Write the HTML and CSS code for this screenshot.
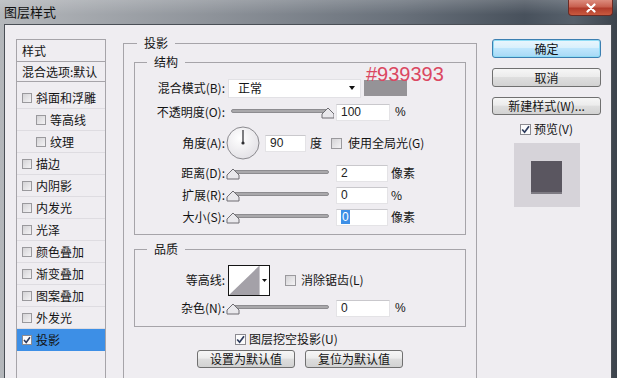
FILE: index.html
```html
<!DOCTYPE html>
<html lang="zh-CN">

<head>
  <meta charset="UTF-8">
  <meta name="viewport" content="width=device-width, initial-scale=1.0">
  <title>图层样式</title>
  <link rel="stylesheet" href="styles.css">
</head>

<body>
  <div class="window">
    <div class="titlebar">
      <span class="title">图层样式</span>
      <div class="close-btn">
        <svg width="12" height="10" viewBox="0 0 12 10">
          <path d="M2.5 1.5 L9.5 8.5 M9.5 1.5 L2.5 8.5" stroke="#fff" stroke-width="2.2" stroke-linecap="round" />
        </svg>
      </div>
    </div>

    <div class="client">
      <!-- effect list on the left -->
      <div class="fx-panel">
        <div class="fx-head">样式</div>
        <div class="fx-blend">混合选项:默认</div>
        <ul class="fx-list">
          <li><span class="cb"></span>斜面和浮雕</li>
          <li class="sub"><span class="cb"></span>等高线</li>
          <li class="sub"><span class="cb"></span>纹理</li>
          <li><span class="cb"></span>描边</li>
          <li><span class="cb"></span>内阴影</li>
          <li><span class="cb"></span>内发光</li>
          <li><span class="cb"></span>光泽</li>
          <li><span class="cb"></span>颜色叠加</li>
          <li><span class="cb"></span>渐变叠加</li>
          <li><span class="cb"></span>图案叠加</li>
          <li><span class="cb"></span>外发光</li>
          <li class="active">
            <span class="cb on"><svg width="8" height="8" viewBox="0 0 8 8"><path d="M1 4 L3.2 6.5 L7 1.2" fill="none" stroke="#2c3a5c" stroke-width="1.6" /></svg></span>投影
          </li>
        </ul>
      </div>

      <!-- drop shadow settings -->
      <fieldset class="group outer">
        <legend>投影</legend>

        <fieldset class="group inner">
          <legend>结构</legend>
          <div class="rows">
            <div class="row h20 blend-row">
              <span class="lbl">混合模式(B):</span>
              <div class="select">正常<span class="arrow"></span></div>
              <div class="swatch"></div>
              <span class="hex">#939393</span>
            </div>

            <div class="row h20">
              <span class="lbl">不透明度(O):</span>
              <svg class="slider" width="108" height="18" viewBox="0 0 108 18">
                <rect x="5.5" y="6.5" width="97" height="3" rx="1.5" fill="#a9a8ab" stroke="#8d8c90" />
                <path d="M102 5 L108 11 L108 15 L96 15 L96 11 Z" fill="#e9e8ec" stroke="#6e6d72" />
              </svg>
              <div class="num wide">100</div>
              <span class="unit pct">%</span>
            </div>

            <div class="row h34">
              <span class="lbl">角度(A):</span>
              <svg class="dial" width="34" height="34" viewBox="0 0 34 34">
                <defs>
                  <radialGradient id="dialFill" cx="0.4" cy="0.35" r="0.7">
                    <stop offset="0" stop-color="#ffffff" />
                    <stop offset="1" stop-color="#e2e0e5" />
                  </radialGradient>
                </defs>
                <circle cx="17" cy="17" r="16" fill="url(#dialFill)" stroke="#8b8a8f" />
                <line x1="17" y1="17" x2="17" y2="4" stroke="#3a3a3e" stroke-width="1.3" />
                <circle cx="17" cy="17" r="1.6" fill="#2e2e32" />
              </svg>
              <div class="num angle">90</div>
              <span class="unit deg">度</span>
              <span class="cb big gap-cb"></span>
              <span class="cb-text">使用全局光(G)</span>
            </div>

            <div class="row h18">
              <span class="lbl">距离(D):</span>
              <svg class="slider" width="108" height="18" viewBox="0 0 108 18">
                <rect x="5.5" y="6.5" width="97" height="3" rx="1.5" fill="#a9a8ab" stroke="#8d8c90" />
                <path d="M7 5 L13 11 L13 15 L1 15 L1 11 Z" fill="#e9e8ec" stroke="#6e6d72" />
              </svg>
              <div class="num">2</div>
              <span class="unit">像素</span>
            </div>

            <div class="row h18">
              <span class="lbl">扩展(R):</span>
              <svg class="slider" width="108" height="18" viewBox="0 0 108 18">
                <rect x="5.5" y="6.5" width="97" height="3" rx="1.5" fill="#a9a8ab" stroke="#8d8c90" />
                <path d="M7 5 L13 11 L13 15 L1 15 L1 11 Z" fill="#e9e8ec" stroke="#6e6d72" />
              </svg>
              <div class="num">0</div>
              <span class="unit">%</span>
            </div>

            <div class="row h18">
              <span class="lbl">大小(S):</span>
              <svg class="slider" width="108" height="18" viewBox="0 0 108 18">
                <rect x="5.5" y="6.5" width="97" height="3" rx="1.5" fill="#a9a8ab" stroke="#8d8c90" />
                <path d="M7 5 L13 11 L13 15 L1 15 L1 11 Z" fill="#e9e8ec" stroke="#6e6d72" />
              </svg>
              <div class="num"><span class="sel">0</span></div>
              <span class="unit">像素</span>
            </div>
          </div>
        </fieldset>

        <fieldset class="group inner quality">
          <legend>品质</legend>
          <div class="rows">
            <div class="row h30">
              <span class="lbl">等高线:</span>
              <svg class="contour" width="42" height="31" viewBox="0 0 42 31">
                <rect x="0.5" y="0.5" width="41" height="30" fill="#fff" stroke="#151515" />
                <path d="M1 30 L31 1 L31 30 Z" fill="#a4a1a8" />
                <line x1="31.5" y1="1" x2="31.5" y2="30" stroke="#c9c7cc" />
                <path d="M34 14 L39 14 L36.5 17 Z" fill="#111" />
              </svg>
              <span class="cb big aa-cb"></span>
              <span class="cb-text">消除锯齿(L)</span>
            </div>

            <div class="row h18">
              <span class="lbl">杂色(N):</span>
              <svg class="slider" width="108" height="18" viewBox="0 0 108 18">
                <rect x="5.5" y="6.5" width="97" height="3" rx="1.5" fill="#a9a8ab" stroke="#8d8c90" />
                <path d="M7 5 L13 11 L13 15 L1 15 L1 11 Z" fill="#e9e8ec" stroke="#6e6d72" />
              </svg>
              <div class="num wide">0</div>
              <span class="unit pct">%</span>
            </div>
          </div>
        </fieldset>

        <div class="knockout">
          <span class="cb big on"><svg width="9" height="9" viewBox="0 0 9 9"><path d="M1.2 4.5 L3.6 7.2 L8 1.3" fill="none" stroke="#2c3a5c" stroke-width="1.7" /></svg></span>
          <span class="cb-text">图层挖空投影(U)</span>
        </div>

        <div class="default-btns">
          <div class="btn">设置为默认值</div>
          <div class="btn">复位为默认值</div>
        </div>
      </fieldset>

      <!-- dialog buttons and preview -->
      <div class="side">
        <div class="btn ok">确定</div>
        <div class="btn">取消</div>
        <div class="btn new-style">新建样式(W)...</div>
        <div class="preview-check">
          <span class="cb big on"><svg width="9" height="9" viewBox="0 0 9 9"><path d="M1.2 4.5 L3.6 7.2 L8 1.3" fill="none" stroke="#2c3a5c" stroke-width="1.7" /></svg></span>
          <span class="cb-text">预览(V)</span>
        </div>
        <div class="preview-box">
          <div class="preview-square"></div>
        </div>
      </div>
    </div>
  </div>
</body>

</html>
```

FILE: styles.css
```css
body {
  margin: 0;
  width: 617px;
  height: 378px;
  overflow: hidden;
  font-family: "Noto Sans CJK SC", sans-serif;
  font-size: 12px;
  line-height: 16px;
  color: #141414;
}

.window {
  width: 617px;
  height: 378px;
  display: flex;
  flex-direction: column;
  background: linear-gradient(to right, #b4b7bb 0%, #8d9299 35%, #68707a 65%, #48515c 85%, #56606b 93%, #3c434c 100%);
}

/* title bar */

.titlebar {
  height: 24px;
  flex: none;
  display: flex;
  justify-content: space-between;
  background: linear-gradient(to bottom, rgba(255, 255, 255, 0.18), rgba(255, 255, 255, 0) 60%);
}

.title {
  padding: 4px 0 0 4px;
  font-size: 13px;
  line-height: 16px;
  color: #101010;
}

.close-btn {
  width: 45px;
  height: 16px;
  margin-right: 4px;
  box-sizing: border-box;
  border: 1px solid #6a2b25;
  border-top: none;
  border-radius: 0 0 4px 4px;
  background: linear-gradient(to bottom, #dc8c7d 0%, #c8604f 45%, #b13b2b 55%, #c95a3f 100%);
  display: flex;
  align-items: center;
  justify-content: center;
}

/* client area */

.client {
  flex: 1;
  margin: 0 5px 0 4px;
  padding: 10px 10px 0 11px;
  background: #efedf1;
  border: 1px solid #4a4f56;
  border-bottom: none;
  display: flex;
  align-items: flex-start;
  overflow: hidden;
}

/* effects list */

.fx-panel {
  width: 90px;
  height: 360px;
  margin-top: 4px;
  flex: none;
  box-sizing: border-box;
  border: 1px solid #a6a4a9;
}

.fx-head {
  height: 21px;
  line-height: 21px;
  padding-left: 5px;
  border-bottom: 1px solid #a6a4a9;
}

.fx-blend {
  height: 19px;
  line-height: 19px;
  padding-left: 5px;
  white-space: nowrap;
  overflow: hidden;
  border-bottom: 1px solid #a6a4a9;
}

.fx-list {
  list-style: none;
  margin: 0;
  padding: 5px 0 0;
}

.fx-list li {
  height: 22px;
  box-sizing: border-box;
  padding-left: 5px;
  display: flex;
  align-items: center;
  border-bottom: 1px solid #dedce1;
  white-space: nowrap;
}

.fx-list li.sub {
  padding-left: 19px;
}

.fx-list li.active {
  background: #3d8fe6;
  border-bottom-color: #3d8fe6;
}

/* checkboxes */

.cb {
  width: 10px;
  height: 10px;
  margin-right: 4px;
  flex: none;
  box-sizing: border-box;
  border: 1px solid #9a999d;
  background: linear-gradient(135deg, #d4d3d6, #f4f3f5);
  display: flex;
  align-items: center;
  justify-content: center;
}

.cb.big {
  width: 11px;
  height: 11px;
}

.cb.on {
  background: #fbfbfc;
  border-color: #8b8a90;
}

.cb-text {
  white-space: nowrap;
}

/* group boxes */

.group {
  margin: 0;
  border: 1px solid #a6a4a9;
  min-inline-size: 0;
}

.group legend {
  padding: 0 7px;
  line-height: 16px;
}

.outer {
  width: 356px;
  margin-left: 17px;
  box-sizing: border-box;
  padding: 0 10px 40px;
}

.outer > legend {
  margin-left: 3px;
}

.inner {
  margin-top: 3px;
  padding: 8px 0 8px;
}

.inner > legend {
  margin-left: 12px;
}

.inner.quality {
  margin-top: 6px;
  padding-bottom: 9px;
}

.rows {
  display: flex;
  flex-direction: column;
  gap: 4px;
}

.row {
  display: flex;
  align-items: center;
  white-space: nowrap;
}

.h18 {
  height: 18px;
}

.h20 {
  height: 20px;
}

.h30 {
  height: 30px;
}

.h34 {
  height: 34px;
}

.lbl {
  width: 90px;
  flex: none;
  text-align: right;
}

.blend-row {
  position: relative;
}

.select {
  width: 133px;
  height: 19px;
  margin-left: 3px;
  box-sizing: border-box;
  padding-left: 9px;
  background: #fff;
  border: 1px solid #e2e1e5;
  display: flex;
  align-items: center;
}

.arrow {
  margin-left: auto;
  margin-right: 5px;
  border-left: 3.5px solid transparent;
  border-right: 3.5px solid transparent;
  border-top: 4px solid #111;
}

.swatch {
  width: 43px;
  height: 16px;
  margin-left: 3px;
  background: #959397;
}

/* annotation laid over the dialog */
.hex {
  position: absolute;
  left: 231px;
  top: -14px;
  font-family: "Liberation Sans", sans-serif;
  font-size: 20px;
  line-height: 20px;
  color: #db4761;
}

.slider {
  margin-left: 1px;
  flex: none;
}

.num {
  width: 52px;
  height: 17px;
  margin-left: 2px;
  box-sizing: border-box;
  padding-left: 4px;
  background: #fff;
  border: 1px solid #e4e3e6;
  border-top-color: #c9c8cc;
  font-family: "Liberation Sans", sans-serif;
  font-size: 12px;
  line-height: 15px;
  color: #222;
}

.num.wide {
  width: 54px;
}

.num .sel {
  background: #3d8fe6;
  color: #fff;
  padding: 0 1px;
}

.unit {
  margin-left: 3px;
}

.unit.pct {
  margin-left: 5px;
  font-family: "Liberation Sans", sans-serif;
}

.dial {
  margin-left: 1px;
  flex: none;
}

.num.angle {
  width: 41px;
  margin-left: 5px;
}

.unit.deg {
  margin-left: 4px;
}

.gap-cb {
  margin-left: 9px;
  margin-right: 6px;
}

.contour {
  margin-left: 3px;
  flex: none;
}

.aa-cb {
  margin-left: 15px;
  margin-right: 5px;
}

.knockout {
  height: 16px;
  margin: 4px 0 0 101px;
  display: flex;
  align-items: center;
}

.knockout .cb {
  margin-right: 3px;
}

.default-btns {
  margin-top: 3px;
  display: flex;
  justify-content: center;
  gap: 10px;
}

/* push buttons */

.btn {
  height: 19px;
  box-sizing: border-box;
  border: 1px solid #707070;
  border-radius: 3px;
  background: linear-gradient(to bottom, #f6f6f6 0%, #ececec 45%, #dedede 50%, #d2d2d2 100%);
  text-align: center;
  line-height: 17px;
  white-space: nowrap;
}

.default-btns .btn {
  width: 98px;
  height: 18px;
  line-height: 16px;
}

.side {
  width: 109px;
  margin: 4px 0 0 15px;
  flex: none;
  display: flex;
  flex-direction: column;
  align-items: center;
}

.side .btn {
  width: 109px;
  margin-bottom: 10px;
}

.side .btn.ok {
  border-color: #3c7fb1;
  box-shadow: inset 0 0 0 1px #8fdcf5;
  background: linear-gradient(to bottom, #eaf6fd 0%, #d9f0fc 45%, #bee6fd 50%, #a7d9f5 100%);
}

.side .btn.new-style {
  height: 18px;
  line-height: 16px;
  margin-bottom: 6px;
}

.preview-check {
  height: 16px;
  display: flex;
  align-items: center;
}

.preview-check .cb {
  margin-right: 3px;
}

.preview-box {
  width: 66px;
  height: 64px;
  margin-top: 6px;
  background: #d6d3d9;
  display: flex;
  justify-content: center;
  align-items: center;
}

.preview-square {
  width: 31px;
  height: 31px;
  margin-top: 3px;
  background: #5a5660;
  box-shadow: 0 2px 0 #7d7a82;
}
```
